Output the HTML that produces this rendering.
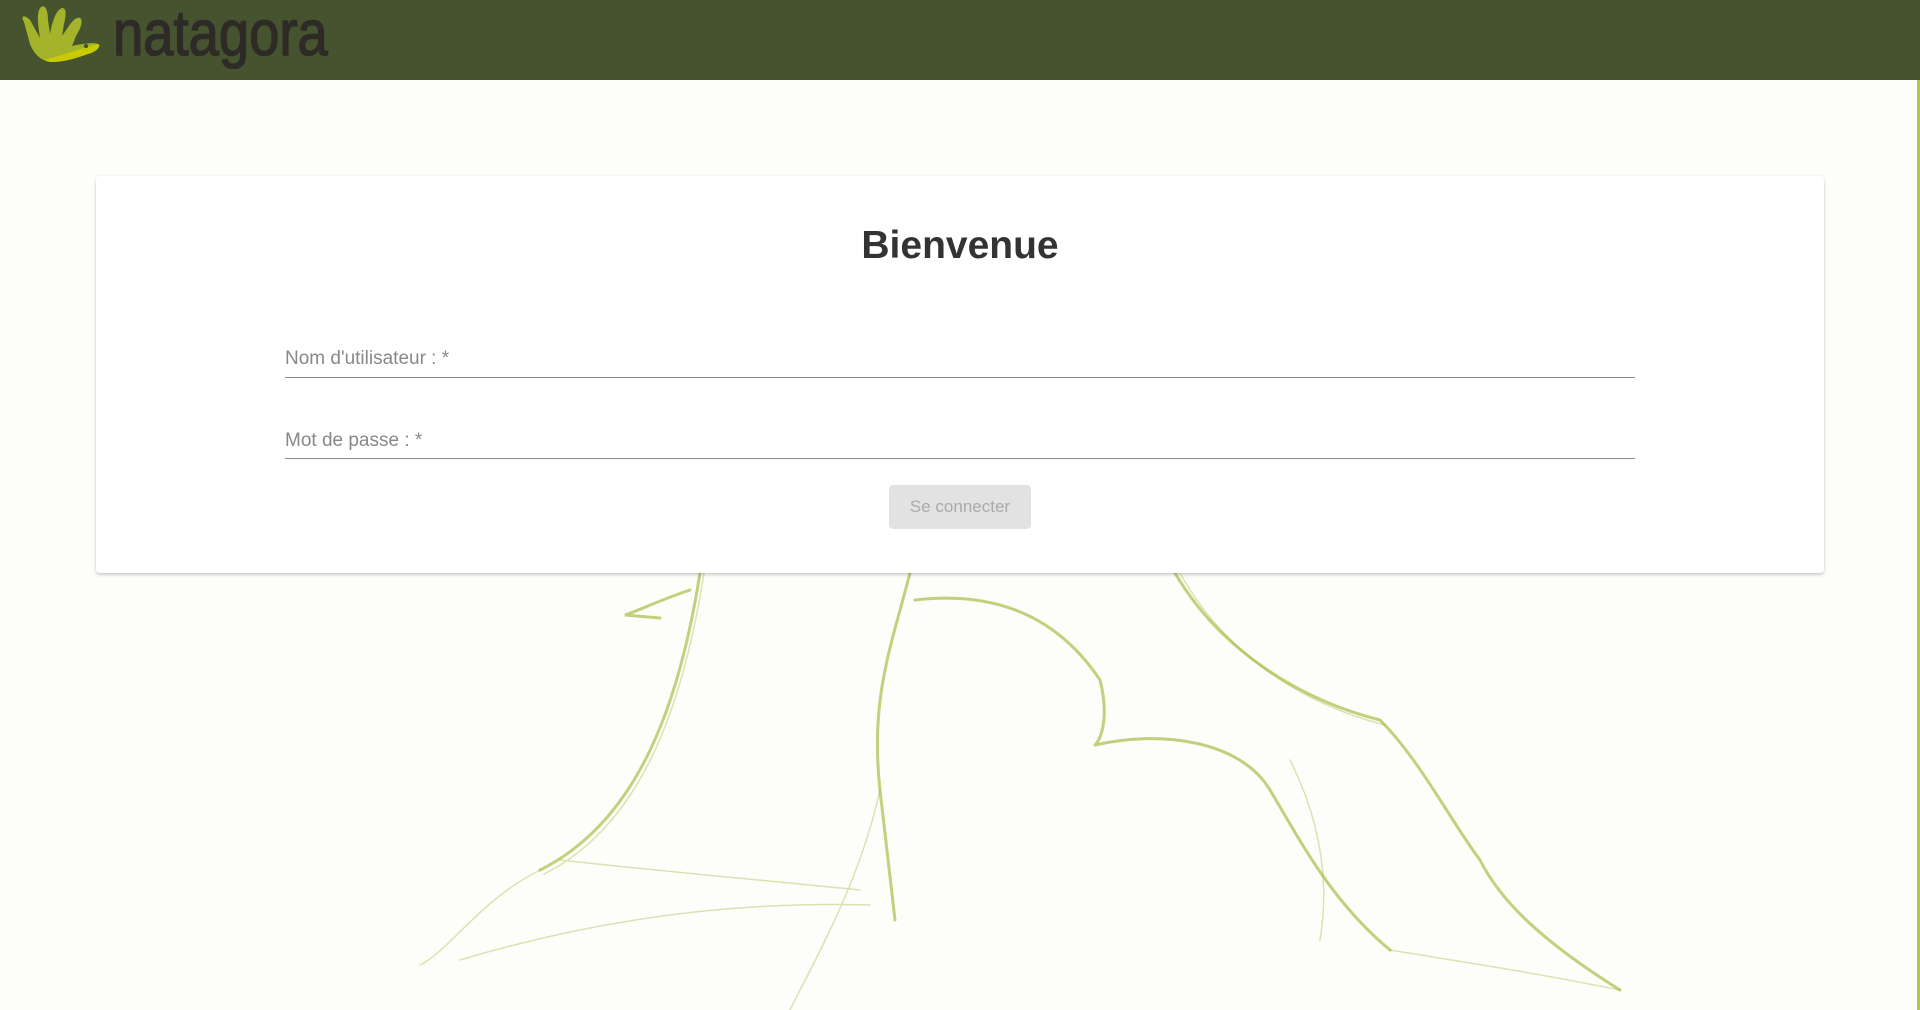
<!DOCTYPE html>
<html><head><meta charset="utf-8"><style>
html,body{margin:0;padding:0;width:1920px;height:1010px;overflow:hidden;background:#fdfdfa;font-family:"Liberation Sans",sans-serif;}
.hdr{position:absolute;left:0;top:0;width:1920px;height:80px;background:#46532f;}
.edge{position:absolute;right:0;top:80px;width:3px;height:930px;background:#b6c547;}
.bg{position:absolute;left:0;top:0;}
.card{position:absolute;left:96px;top:176px;width:1728px;height:397px;background:rgba(255,255,255,0.88);border-radius:4px;box-shadow:0 2px 3px rgba(0,0,0,0.18),0 0 2px rgba(0,0,0,0.06);}
h1{position:absolute;left:0;width:100%;top:224px;margin:0;text-align:center;font-size:39px;font-weight:bold;color:#333;}
.lbl{position:absolute;left:285px;font-size:19px;color:#888;}
.line{position:absolute;left:285px;width:1350px;height:1px;background:#8a8a8a;}
.btn{position:absolute;left:889px;top:485px;width:142px;height:44px;background:#e2e2e2;border-radius:4px;color:#aaa;font-size:17px;text-align:center;line-height:44px;}
</style></head><body>
<svg class="bg" width="1920" height="1010" viewBox="0 0 1920 1010" fill="none" stroke="#9fb22a" stroke-linecap="round">
<g stroke-width="3" opacity="0.6">
<path d="M700 573 C680 700 640 820 540 870"/>
<path d="M910 573 C890 650 870 700 880 790 L895 920"/>
<path d="M915 600 C1000 590 1060 620 1100 680 C1110 720 1100 740 1095 745"/>
<path d="M1175 573 C1220 650 1300 700 1380 720 C1420 760 1450 820 1480 860 C1500 900 1540 940 1620 990"/>
<path d="M1095 745 C1160 730 1240 740 1270 790 C1300 840 1330 900 1390 950"/>
<path d="M690 590 C660 600 640 610 625 615 L660 618"/>
</g>
<g stroke-width="1.5" opacity="0.35">
<path d="M704 573 C684 700 644 824 544 874"/>
<path d="M1180 573 C1225 655 1305 705 1385 725"/>
<path d="M540 870 C480 900 450 950 420 965"/>
<path d="M460 960 C560 930 700 900 870 905"/>
<path d="M560 860 C650 870 760 880 860 890"/>
<path d="M880 790 C860 880 820 950 790 1010"/>
<path d="M1390 950 C1450 960 1520 970 1620 990"/>
<path d="M1290 760 C1320 820 1330 880 1320 940"/>
</g>
<g stroke-width="2" opacity="0.12">
<path d="M820 520 C880 420 980 350 1140 330"/>
<path d="M1130 320 C1160 380 1160 440 1120 500"/>
<path d="M700 520 C760 430 820 380 900 350"/>
</g>
</svg>
<div class="hdr">
<svg width="110" height="70" viewBox="0 0 110 70" style="position:absolute;left:16px;top:2px">
<path d="M8 20 C4 14 8 12 14 18 L24 36 C22 22 20 10 25 5 C30 2 32 10 32 18 L34 32 C36 20 40 8 46 6 C51 6 50 14 48 22 L46 34 C52 26 58 14 64 16 C68 18 64 28 60 34 L56 44 C66 42 76 40 82 42 C86 44 80 50 72 52 C60 56 50 60 34 60 C24 58 18 52 14 42 Z" fill="#a3b42a"/>
<path d="M28 58 C44 54 60 48 82 42 C86 44 80 50 72 52 C60 56 50 60 34 60 Z" fill="#c8cb00"/>
<circle cx="70" cy="44" r="2.2" fill="#46532f"/>
</svg>
<div style="position:absolute;left:113px;top:1px;font-size:64px;line-height:64px;color:#2e2a27;-webkit-text-stroke:1.5px #2e2a27;font-family:'Liberation Sans',sans-serif;transform:scaleX(0.85);transform-origin:left;white-space:nowrap;">natagora</div>
</div>
<div class="edge"></div>
<div class="card"></div>
<h1>Bienvenue</h1>
<div class="lbl" style="top:348px">Nom d'utilisateur : *</div>
<div class="line" style="top:377px"></div>
<div class="lbl" style="top:430px">Mot de passe : *</div>
<div class="line" style="top:458px"></div>
<div class="btn">Se connecter</div>
</body></html>
